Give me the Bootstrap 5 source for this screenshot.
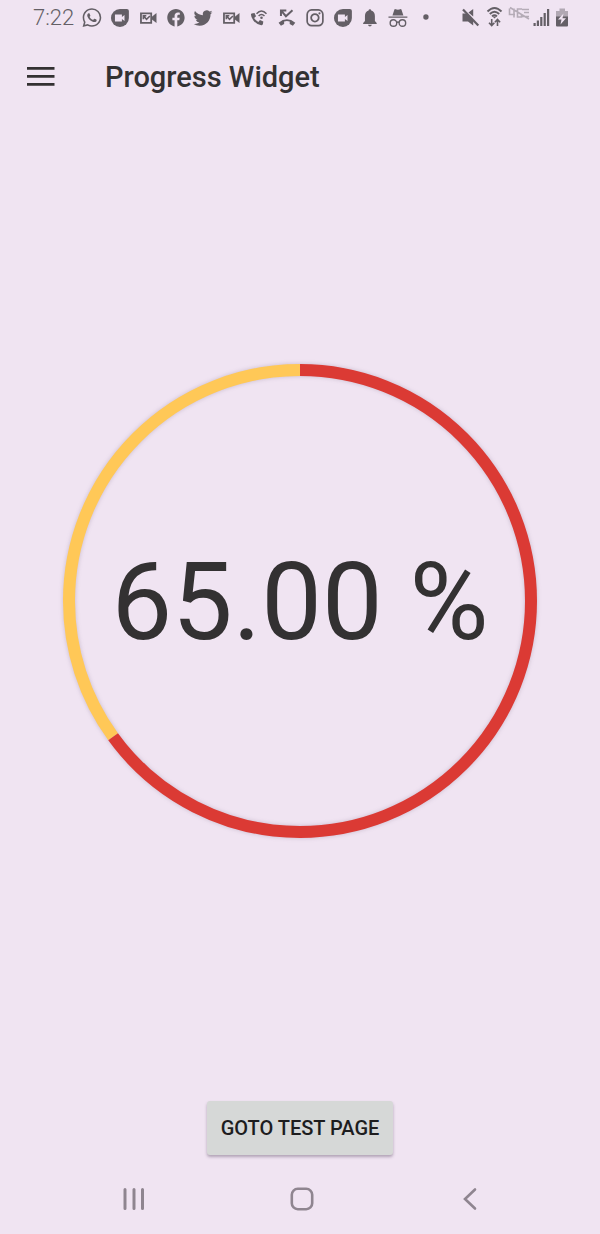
<!DOCTYPE html>
<html lang="en">
<head>
<meta charset="utf-8">
<meta name="viewport" content="width=device-width, initial-scale=1">
<title>Progress Widget</title>
<link href="https://cdn.jsdelivr.net/npm/bootstrap@5.3.0/dist/css/bootstrap.min.css" rel="stylesheet">
<style>
  :root { --page: #f0e4f2; --ink: #333132; --status: #645f66; --nav: #8f8590; }
  body { background: var(--page); color: var(--ink); font-family: Roboto, "Liberation Sans", sans-serif; }
  svg { display: block; }
  .status-bar { height: 36px; padding: 0 28px 0 33px; color: var(--status); }
  .status-bar svg { fill: currentColor; height: 36px; }
  .clock { font-size: 22px; line-height: 36px; font-weight: 300; width: 45px; }
  .notices { width: 362px; }
  .notices svg { flex: 1 1 0; min-width: 0; }
  .line { fill: none; stroke: currentColor; }
  .hole { fill: var(--page); }
  .app-bar { padding: 17px 24px 0; }
  .menu-btn { width: 33px; height: 46px; }
  .app-title { font-size: 29px; line-height: 46px; font-weight: 500; margin-left: 48px; padding-top: 1px; }
  .ring { width: 80%; max-width: 480px; }
  .ring svg { width: 100%; overflow: visible; filter: drop-shadow(0 0 2px rgba(80, 60, 90, .25)); }
  .ring circle { fill: none; stroke-width: 12; }
  .ring-value { font-size: 108px; line-height: 108px; padding-top: 2px; }
  .goto-btn { --bs-btn-font-size: 20px; --bs-btn-line-height: 30px; --bs-btn-font-weight: 500;
    --bs-btn-padding-x: 14px; --bs-btn-padding-y: 12px; --bs-btn-border-width: 0; --bs-btn-border-radius: 3px;
    --bs-btn-color: #1d1d1e; --bs-btn-bg: #d6d8d7; --bs-btn-hover-bg: #c9cbca; --bs-btn-active-bg: #bfc1c0;
    box-shadow: 0 2px 3px rgba(60, 40, 70, .35); }
  .nav-keys { height: 70px; padding: 0 46px 0 50px; margin-top: 9px; color: var(--nav); }
  .nav-keys svg { fill: none; stroke: currentColor; stroke-width: 3; stroke-linecap: round; }
</style>
</head>
<body class="min-vh-100 d-flex flex-column">

<svg width="0" height="0" class="position-absolute" aria-hidden="true">
  <symbol id="duo" viewBox="-14 -18 28 36">
    <path d="M0-9H7Q9-9 9-7V0A9 9 0 1 1 0-9Z"/>
    <path class="hole" d="M-5-3.6H2V-1L4.600-3V3L2 1V3.600H-5Z"/>
  </symbol>
  <symbol id="missed-video" viewBox="-14 -18 28 36">
    <path class="line" stroke-width="1.800" d="M-7-4.700H3.300V4.900H-7Z"/>
    <path d="M4-1.200 8.600-5V5L4 1.400Z"/>
    <path class="line" stroke-width="1.600" d="M-4.600 1.200V-2.200H-1.600M-4.400-2-1.400 1.400 2-2"/>
  </symbol>
</svg>

<div class="status-bar d-flex align-items-center">
  <span class="clock flex-shrink-0">7:22</span>
  <div class="notices d-flex" aria-hidden="true">
    <svg viewBox="-14 -18 28 36"><path transform="translate(-9.4 -9.8) scale(1.18)" d="M13.601 2.326A7.854 7.854 0 0 0 7.994 0C3.627 0 .068 3.558.064 7.926c0 1.399.366 2.76 1.057 3.965L0 16l4.204-1.102a7.933 7.933 0 0 0 3.79.965h.004c4.368 0 7.926-3.558 7.93-7.93A7.898 7.898 0 0 0 13.6 2.326zM7.994 14.521a6.573 6.573 0 0 1-3.356-.92l-.24-.144-2.494.654.666-2.433-.156-.251a6.56 6.56 0 0 1-1.007-3.505c0-3.626 2.957-6.584 6.591-6.584a6.56 6.56 0 0 1 4.66 1.931 6.557 6.557 0 0 1 1.928 4.66c-.004 3.639-2.961 6.592-6.592 6.592zm3.615-4.934c-.197-.099-1.17-.578-1.353-.646-.182-.065-.315-.099-.445.099-.133.197-.513.646-.627.775-.114.133-.232.148-.43.05-.197-.1-.836-.308-1.592-.985-.59-.525-.985-1.175-1.103-1.372-.114-.198-.011-.304.088-.403.087-.088.197-.232.296-.346.1-.114.133-.198.198-.33.065-.134.034-.248-.015-.347-.05-.099-.445-1.076-.612-1.47-.16-.389-.323-.335-.445-.34-.114-.007-.247-.007-.38-.007a.729.729 0 0 0-.529.247c-.182.198-.691.677-.691 1.654 0 .977.71 1.916.81 2.049.098.133 1.394 2.132 3.383 2.992.47.205.84.326 1.129.418.475.152.904.129 1.246.08.38-.058 1.171-.48 1.338-.943.164-.464.164-.86.114-.943-.049-.084-.182-.133-.38-.232z"/></svg>
    <svg><use href="#duo"/></svg>
    <svg><use href="#missed-video"/></svg>
    <svg viewBox="-14 -18 28 36"><path transform="translate(-8.7 -9) scale(1.09)" d="M16 8.049c0-4.446-3.582-8.05-8-8.05C3.58 0-.002 3.603-.002 8.05c0 4.017 2.926 7.347 6.75 7.951v-5.625h-2.03V8.05H6.75V6.275c0-2.017 1.195-3.131 3.022-3.131.876 0 1.791.157 1.791.157v1.98h-1.009c-.993 0-1.303.621-1.303 1.258v1.51h2.218l-.354 2.326H9.25V16c3.824-.604 6.75-3.934 6.75-7.951z"/></svg>
    <svg viewBox="-14 -18 28 36"><path transform="translate(-9.3 -10) scale(1.18)" d="M5.026 15c6.038 0 9.341-5.003 9.341-9.334 0-.14 0-.282-.006-.422A6.685 6.685 0 0 0 16 3.542a6.658 6.658 0 0 1-1.889.518 3.301 3.301 0 0 0 1.447-1.817 6.533 6.533 0 0 1-2.087.793A3.286 3.286 0 0 0 7.875 6.03a9.325 9.325 0 0 1-6.767-3.429 3.289 3.289 0 0 0 1.018 4.382A3.323 3.323 0 0 1 .64 6.575v.045a3.288 3.288 0 0 0 2.632 3.218 3.203 3.203 0 0 1-.865.115 3.23 3.23 0 0 1-.614-.057 3.283 3.283 0 0 0 3.067 2.277A6.588 6.588 0 0 1 .78 13.58a6.32 6.32 0 0 1-.78-.045A9.344 9.344 0 0 0 5.026 15z"/></svg>
    <svg><use href="#missed-video"/></svg>
    <svg viewBox="-14 -18 28 36">
      <path d="M-7.4-4.6-4.4-5-2.9-1.7-4.8-.1Q-3.300 2.600-.6 3.900L1 2 4.400 3.400 4 6.400Q3.600 7.400 2.400 7.200-2.500 6.500-5.600 2.500-8.200-1-8-3.800Z"/>
      <path class="line" stroke-width="1.500" d="M-2.400-4.200Q2.500-9.800 7.600-4.200M-.3-2Q2.500-5 5.600-2"/>
      <circle cx="2.600" cy="-.2" r="1.300"/>
    </svg>
    <svg viewBox="-14 -18 28 36">
      <path class="line" stroke-width="2" d="M-6-2V-7.600H-.6M-6-7.600-1-1.800 5.600-7.800"/>
      <path d="M-8.400 4.800Q0-2.200 8.400 4.800L6 7.800 2.800 6V3.400Q0 2.600-2.800 3.400V6L-6 7.800Z"/>
    </svg>
    <svg viewBox="-14 -18 28 36">
      <rect class="line" stroke-width="1.700" x="-7.800" y="-8.100" width="15.800" height="15.800" rx="4.500"/>
      <circle class="line" stroke-width="1.800" cy="-.2" r="3.800"/><circle cx="4.600" cy="-4.700" r="1.100"/>
    </svg>
    <svg><use href="#duo"/></svg>
    <svg viewBox="-14 -18 28 36"><path d="M-1.300-7.500A1.300 1.300 0 0 1 1.300-7.500Q5-6.300 5-2V3L6.800 5V6H-6.800V5L-5 3V-2Q-5-6.300-1.300-7.500ZM-2 6.800H2Q1.500 8.500 0 8.500T-2 6.800Z"/></svg>
    <svg viewBox="-14 -18 28 36">
      <path d="M-5.500-2.500-3.600-8.400Q-3.300-9.200-2.300-8.800L0-8.200 2.300-8.800Q3.300-9.200 3.600-8.400L5.500-2.500ZM-9.500-1.600H9.500V-.3H-9.500Z"/>
      <g class="line" stroke-width="1.400"><circle cx="-4.500" cy="5" r="3.300"/><circle cx="4.500" cy="5" r="3.300"/><path d="M-1.300 4.500Q0 3.500 1.300 4.500"/></g>
    </svg>
    <svg viewBox="-14 -18 28 36"><circle cy="-1" r="2.700"/></svg>
  </div>
  <div class="d-flex ms-auto" aria-hidden="true">
    <svg width="25" viewBox="0 0 25 36">
      <path d="M4.500 13.500H8.500L15.200 20V25.500L10 21.500H4.500ZM15.200 9V16.500L10.500 12.500Z"/>
      <path class="line" stroke-width="2.200" d="M5 9.500 20.300 25.500"/>
    </svg>
    <svg width="25" viewBox="1 0 25 36">
      <g class="line" stroke-width="1.900"><path d="M5.500 11.500Q12.500 4.500 19.500 11.500M7.800 14Q12.500 9.500 17.200 14M10 16.400Q12.500 14.200 15 16.400"/></g>
      <path d="M12.500 18.500 10.500 16.500H14.500Z"/>
      <path class="line" stroke-width="1.600" d="M9.700 19V25M7 22.800 9.700 25.500 12.400 22.800M15.500 26V20M12.900 22.200 15.500 19.500 18.100 22.200"/>
    </svg>
    <svg width="24" viewBox="1 0 24 36" opacity=".42">
      <path class="line" stroke-width="1.600" d="M2.500 8.500V14.500H8M7 8.500V17.500M15 9H10.500V17H14.500V14M3 7.500 22 19M15 9.500H22M17 12.500H22M15 16.500H22"/>
    </svg>
    <svg width="20" viewBox="1 0 20 36"><path d="M2.500 23H4.700V26H2.500ZM5.800 20.500H8V26H5.800ZM9.200 17H11.400V26H9.200ZM12.600 13H14.800V26H12.600ZM16 9H18.200V26H16Z"/></svg>
    <svg width="20" viewBox="0 0 20 36">
      <path opacity=".45" d="M7.500 8.500H13V11H16V17H4V11H7.500Z"/>
      <path d="M4 16.500H16V25.500Q16 26.500 15 26.500H5Q4 26.500 4 25.500Z"/>
      <path class="hole" d="M11.500 13.500 6 19.500H9.500L8.500 24.500 14 18.300H10.500Z"/>
    </svg>
  </div>
</div>

<header class="app-bar d-flex align-items-center">
  <button type="button" class="menu-btn btn p-0 border-0" aria-label="Open menu">
    <svg width="33" height="46" viewBox="0 1 33 46" fill="#333132"><path d="M3 14H30.500V16.700H3ZM3 22H30.500V24.700H3ZM3 30H30.500V32.700H3Z"/></svg>
  </button>
  <h1 class="app-title mb-0">Progress Widget</h1>
</header>

<main class="flex-grow-1 d-flex align-items-center justify-content-center">
  <div class="ring position-relative" role="progressbar" aria-label="Progress" aria-valuenow="65" aria-valuemin="0" aria-valuemax="100">
    <svg viewBox="0 0 480 480">
      <g transform="rotate(-90 240 240)">
        <circle cx="240" cy="240" r="231" stroke="#ffc857" pathLength="100" stroke-dasharray="0 65 35"/>
        <circle cx="240" cy="240" r="231" stroke="#db3a34" pathLength="100" stroke-dasharray="65 35"/>
      </g>
    </svg>
    <div class="ring-value position-absolute top-0 start-0 w-100 h-100 d-flex align-items-center justify-content-center text-nowrap">65.00 %</div>
  </div>
</main>

<button type="button" class="goto-btn btn align-self-center">GOTO TEST PAGE</button>

<nav class="nav-keys d-flex" aria-label="System navigation">
  <button type="button" class="btn border-0 p-0 flex-fill w-100 text-reset d-flex align-items-center justify-content-center" aria-label="Recent apps">
    <svg width="24" height="24" viewBox="0 0 24 24"><path d="M3 2.500V21.500M12 2.500V21.500M20.500 2.500V21.500"/></svg>
  </button>
  <button type="button" class="btn border-0 p-0 flex-fill w-100 text-reset d-flex align-items-center justify-content-center" aria-label="Home">
    <svg width="24" height="24" viewBox="0 0 24 24"><rect x="1.800" y="1.800" width="20.400" height="20.400" rx="6" stroke-width="2.600"/></svg>
  </button>
  <button type="button" class="btn border-0 p-0 flex-fill w-100 text-reset d-flex align-items-center justify-content-center" aria-label="Back">
    <svg width="24" height="24" viewBox="0 0 24 24"><path stroke-width="2.600" d="M17 2.500 7 12 17 21.500"/></svg>
  </button>
</nav>

<script src="https://cdn.jsdelivr.net/npm/bootstrap@5.3.0/dist/js/bootstrap.bundle.min.js"></script>
</body>
</html>
